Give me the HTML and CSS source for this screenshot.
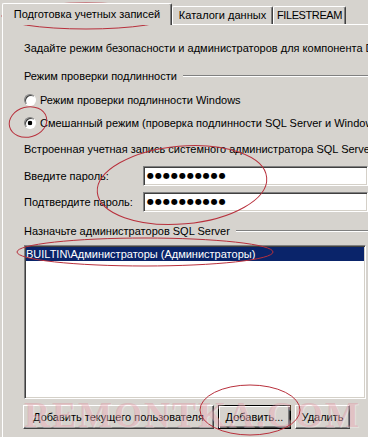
FILE: index.html
```html
<!DOCTYPE html>
<html lang="ru">
<head>
<meta charset="utf-8">
<link rel="stylesheet" href="styles.css">
</head>
<body>
<div class="tabs">
  <div class="tab tab1 sel">Подготовка учетных записей</div>
  <div class="tab tab2">Каталоги данных</div>
  <div class="tab tab3">FILESTREAM</div>
</div>
<div class="panel">
  <p class="line intro">Задайте режим безопасности и администраторов для компонента Database Engine.</p>
  <div class="group g1"><span>Режим проверки подлинности</span><i class="etch"></i></div>
  <div class="radio r1"><span class="rb"></span><span>Режим проверки подлинности Windows</span></div>
  <div class="radio r2"><span class="rb on"></span><span>Смешанный режим (проверка подлинности SQL Server и Windows)</span></div>
  <p class="line sa">Встроенная учетная запись системного администратора SQL Server</p>
  <div class="field f1"><span class="lbl">Введите пароль:</span><span class="input">●●●●●●●●●●</span></div>
  <div class="field f2"><span class="lbl">Подтвердите пароль:</span><span class="input">●●●●●●●●●●</span></div>
  <div class="group g2"><span>Назначьте администраторов SQL Server</span><i class="etch"></i></div>
  <div class="list"><div class="item sel">BUILTIN\Администраторы (Администраторы)</div></div>
  <div class="buttons">
    <div class="btn b1">Добавить текущего пользователя</div>
    <div class="btn b2 default"><span>Добавить...</span></div>
    <div class="btn b3">Удалить</div>
  </div>
</div>
<div class="watermark">REMONTKA.COM</div>
<svg class="marks" width="368" height="437" viewBox="0 0 368 437">
  <ellipse cx="86" cy="16" rx="84" ry="13"/>
  <ellipse cx="28" cy="122" rx="19" ry="15" transform="rotate(-15 28 122)"/>
  <ellipse cx="182" cy="185" rx="85" ry="39" transform="rotate(-5 182 185)"/>
  <ellipse cx="145" cy="252" rx="128" ry="14"/>
  <ellipse cx="250" cy="410" rx="50" ry="25"/>
</svg>
</body>
</html>
```

FILE: styles.css
```css
html, body {
  margin: 0;
  padding: 0;
}
body {
  width: 368px;
  height: 437px;
  overflow: hidden;
  position: relative;
  background: #d6d3ce;
  font-family: "Liberation Sans", Arial, sans-serif;
  font-size: 11px;
  line-height: 14px;
  color: #000;
  white-space: nowrap;
}

/* tabs */
.tabs {
  display: flex;
  align-items: flex-end;
  height: 24px;
  padding-left: 2px;
}
.tab {
  box-sizing: border-box;
  height: 18px;
  line-height: 16px;
  text-align: center;
  border-top: 1px solid #fff;
  border-left: 1px solid #fff;
  border-right: 1px solid #404040;
  box-shadow: inset -1px 0 #808080;
  border-radius: 2px 2px 0 0;
  background: #d6d3ce;
  overflow: hidden;
}
.tab1 { width: 170px; }
.tab2 { width: 101px; }
.tab3 { width: 73px; letter-spacing: -0.4px; }
.tab.sel {
  height: 22px;
  line-height: 20px;
  margin-bottom: -1px;
  position: relative;
  z-index: 1;
}

/* panel */
.panel {
  margin-left: 2px;
  border-top: 1px solid #fff;
  border-left: 1px solid #fff;
  padding: 16px 0 0 21px;
  height: 396px;
  overflow: hidden;
}
.line {
  margin: 0;
  height: 14px;
}
.group {
  display: flex;
  align-items: center;
  gap: 6px;
  height: 14px;
}
.etch {
  flex: 1;
  height: 0;
  border-top: 1px solid #808080;
  border-bottom: 1px solid #fff;
}
.g1 { margin-top: 14px; }
.radio {
  display: flex;
  align-items: center;
  height: 14px;
}
.r1 { margin-top: 10px; }
.r2 { margin-top: 9px; }
.rb {
  box-sizing: border-box;
  width: 12px;
  height: 12px;
  margin-right: 4px;
  border-radius: 50%;
  border: 1px solid;
  border-color: #808080 #fff #fff #808080;
  box-shadow: inset 1px 1px #404040;
  background: #fff;
  flex: none;
}
.rb.on {
  background: radial-gradient(circle, #000 0 2px, #fff 2.6px);
}
.sa { margin-top: 12px; }

.field {
  display: flex;
  align-items: center;
  height: 20px;
}
.f1 { margin-top: 10px; }
.f2 { margin-top: 6px; }
.lbl {
  width: 119px;
  flex: none;
}
.input {
  flex: 1;
  box-sizing: border-box;
  height: 20px;
  background: #fff;
  border: 1px solid;
  border-color: #808080 #fff #fff #808080;
  box-shadow: inset 1px 1px #404040, inset -1px -1px #d4d0c8;
  padding-left: 3px;
  font-family: "DejaVu Sans", sans-serif;
  font-size: 8px;
  line-height: 18px;
  letter-spacing: 1px;
}
.g2 { margin-top: 12px; }

.list {
  box-sizing: border-box;
  width: 342px;
  height: 154px;
  margin-top: 7px;
  background: #fff;
  border: 1px solid;
  border-color: #808080 #fff #fff #808080;
  box-shadow: inset 1px 1px #404040, inset -1px -1px #d4d0c8;
  padding: 1px;
}
.item {
  height: 14px;
  line-height: 14px;
}
.item.sel {
  background: #0a246a;
  color: #fff;
}

.buttons {
  display: flex;
  gap: 4px;
  margin-top: 6px;
  margin-left: -1px;
}
.btn {
  box-sizing: border-box;
  height: 24px;
  line-height: 22px;
  text-align: center;
  background: #d6d3ce;
  border: 1px solid;
  border-color: #fff #404040 #404040 #fff;
  box-shadow: inset -1px -1px #808080;
}
.b1 { width: 191px; }
.b2 { width: 73px; }
.b3 { width: 55px; }
.btn.default {
  border: 1px solid #000;
  box-shadow: inset 1px 1px #fff, inset -1px -1px #404040, inset -2px -2px #808080;
}

/* overlays */
.watermark {
  position: absolute;
  left: 24px;
  top: 397px;
  font-family: "Liberation Serif", serif;
  font-weight: bold;
  font-size: 36px;
  line-height: 36px;
  letter-spacing: 2px;
  color: rgba(225, 120, 140, 0.3);
  text-shadow: 1px 1px 0 rgba(255, 255, 255, 0.3);
  pointer-events: none;
}
.marks {
  position: absolute;
  left: 0;
  top: 0;
  pointer-events: none;
}
.marks ellipse {
  fill: none;
  stroke: #b8303c;
  stroke-width: 1;
}
```
